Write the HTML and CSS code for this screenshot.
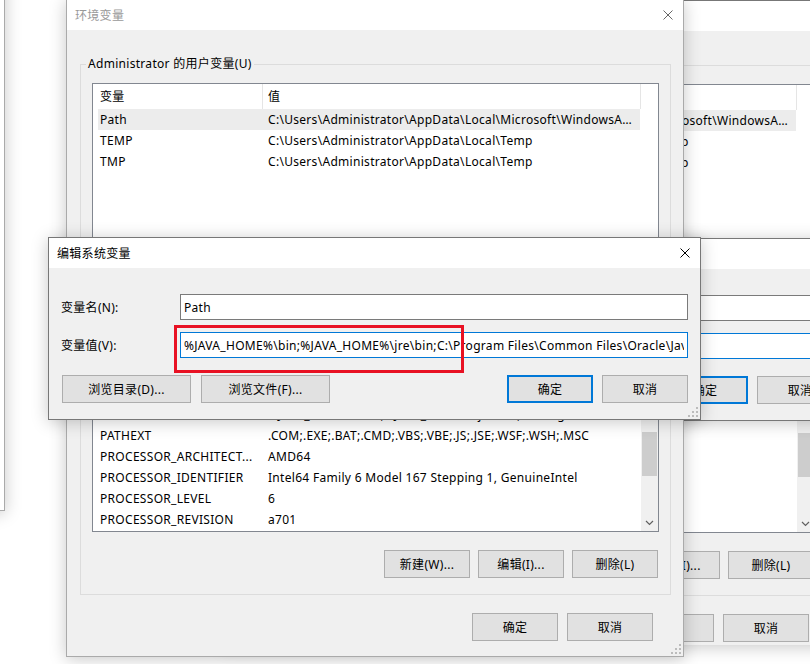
FILE: index.html
```html
<!DOCTYPE html>
<html lang="zh-CN">
<head>
  <meta charset="UTF-8">
  <title>环境变量</title>
  <link rel="stylesheet" href="styles.css">
</head>
<body>
  <div class="win side"></div>

  <div class="win env" id="envMain">
    <div class="titlebar">
      <span class="title">环境变量</span>
      <span class="close"><svg width="10" height="10" viewBox="0 0 10 10"><path d="M0.5 0.5L9.5 9.5M9.5 0.5L0.5 9.5" /></svg></span>
    </div>
    <div class="env-body">
      <fieldset class="group user">
        <legend>Administrator 的用户变量(U)</legend>
        <div class="listview">
          <div class="lv-main">
            <div class="lv-head"><div class="col name">变量</div><div class="col val">值</div></div>
            <div class="row sel"><div class="name">Path</div><div class="val">C:\Users\Administrator\AppData\Local\Microsoft\WindowsA...</div></div>
            <div class="row"><div class="name">TEMP</div><div class="val">C:\Users\Administrator\AppData\Local\Temp</div></div>
            <div class="row"><div class="name">TMP</div><div class="val">C:\Users\Administrator\AppData\Local\Temp</div></div>
          </div>
        </div>
        <div class="btn-row">
          <button class="btn">新建(N)...</button>
          <button class="btn">编辑(E)...</button>
          <button class="btn">删除(D)</button>
        </div>
      </fieldset>
      <fieldset class="group sys">
        <legend>系统变量(S)</legend>
        <div class="listview">
          <div class="lv-main">
            <div class="lv-head"><div class="col name">变量</div><div class="col val">值</div></div>
            <div class="row"><div class="name">NUMBER_OF_PROCESSORS</div><div class="val">16</div></div>
            <div class="row"><div class="name">OS</div><div class="val">Windows_NT</div></div>
            <div class="row"><div class="name">Path</div><div class="val">%JAVA_HOME%\bin;%JAVA_HOME%\jre\bin;C:\Program Files\Common Files\Oracle\Java\javapath;C:\Windows\system32</div></div>
            <div class="row"><div class="name">PATHEXT</div><div class="val">.COM;.EXE;.BAT;.CMD;.VBS;.VBE;.JS;.JSE;.WSF;.WSH;.MSC</div></div>
            <div class="row"><div class="name">PROCESSOR_ARCHITECT...</div><div class="val">AMD64</div></div>
            <div class="row"><div class="name">PROCESSOR_IDENTIFIER</div><div class="val">Intel64 Family 6 Model 167 Stepping 1, GenuineIntel</div></div>
            <div class="row"><div class="name">PROCESSOR_LEVEL</div><div class="val">6</div></div>
            <div class="row"><div class="name">PROCESSOR_REVISION</div><div class="val">a701</div></div>
          </div>
          <div class="scrollbar">
            <div class="thumb"></div>
            <svg class="arrow" width="17" height="17" viewBox="0 0 17 17"><polyline points="5,7 8.5,10.5 12,7" /></svg>
          </div>
        </div>
        <div class="btn-row">
          <button class="btn">新建(W)...</button>
          <button class="btn">编辑(I)...</button>
          <button class="btn">删除(L)</button>
        </div>
      </fieldset>
      <div class="btn-row foot">
        <button class="btn">确定</button>
        <button class="btn">取消</button>
      </div>
    </div>
    <svg class="grip" width="10" height="10" viewBox="0 0 10 10"><path d="M8 0h2v2h-2zM8 4h2v2h-2zM4 4h2v2h-2zM8 8h2v2h-2zM4 8h2v2h-2zM0 8h2v2h-2z" /></svg>
  </div>

  <div class="win edit" id="editMain">
    <div class="titlebar">
      <span class="title">编辑系统变量</span>
      <span class="close"><svg width="10" height="10" viewBox="0 0 10 10"><path d="M0.5 0.5L9.5 9.5M9.5 0.5L0.5 9.5" /></svg></span>
    </div>
    <div class="edit-body">
      <div class="fields">
        <label>变量名(N):</label>
        <input class="field" value="Path">
        <label>变量值(V):</label>
        <input class="field focus" value="%JAVA_HOME%\bin;%JAVA_HOME%\jre\bin;C:\Program Files\Common Files\Oracle\Java\javapath;C:\Windows\system32">
      </div>
      <div class="edit-btns">
        <button class="btn wide">浏览目录(D)...</button>
        <button class="btn wide">浏览文件(F)...</button>
        <button class="btn default">确定</button>
        <button class="btn">取消</button>
      </div>
    </div>
    <svg class="grip" width="10" height="10" viewBox="0 0 10 10"><path d="M8 0h2v2h-2zM8 4h2v2h-2zM4 4h2v2h-2zM8 8h2v2h-2zM4 8h2v2h-2zM0 8h2v2h-2z" /></svg>
  </div>

  <div class="mark"></div>

  <script>
    // second copy of both windows, sitting behind and to the right
    var env = document.getElementById('envMain');
    var envBack = env.cloneNode(true);
    envBack.id = 'envBack';
    envBack.classList.add('env-back');
    envBack.querySelectorAll('.sys .row .val').forEach(function (c) { c.textContent = ''; });
    document.body.insertBefore(envBack, env);

    var edit = document.getElementById('editMain');
    var editBack = edit.cloneNode(true);
    editBack.id = 'editBack';
    editBack.classList.add('edit-back');
    editBack.querySelectorAll('.field').forEach(function (f) { f.value = ''; });
    document.body.insertBefore(editBack, env);
  </script>
</body>
</html>
```

FILE: styles.css
```css
* {
  box-sizing: border-box;
}
html, body {
  margin: 0;
  width: 810px;
  height: 664px;
  overflow: hidden;
}
body {
  position: relative;
  background-color: #fff;
  color: #000;
  font: 12px "Noto Sans", "Noto Sans CJK SC", sans-serif;
  letter-spacing: 0.3px;
}
.win {
  position: absolute;
  background-color: #f0f0f0;
  border: 1px solid #aaa;
  box-shadow: 0 2px 16px rgba(0, 0, 0, 0.22);
}
.side {
  left: -300px;
  top: -20px;
  width: 305px;
  height: 531px;
  background-color: #fff;
  z-index: 1;
}
.titlebar {
  height: 30px;
  background-color: #fff;
  display: flex;
  align-items: center;
  justify-content: space-between;
  padding-left: 8px;
}
.title {
  color: #999;
}
.close {
  width: 30px;
  height: 30px;
  display: flex;
  align-items: center;
  justify-content: center;
}
.close svg path {
  stroke: #666;
  stroke-width: 1;
  fill: none;
}
.grip {
  position: absolute;
  right: 2px;
  bottom: 2px;
}
.grip path {
  fill: #bcbcbc;
}

/* 环境变量 */
.env {
  left: 66px;
  top: -1px;
  width: 618px;
  z-index: 4;
}
.env-back {
  left: 222px;
  top: 0;
  height: 645px;
  overflow: hidden;
  border-bottom: 0;
  border-top-color: #777;
  z-index: 2;
}
.env-body {
  padding: 26px 12px 15px 13px;
}
.group {
  margin: 0;
  min-width: 0;
  border: 1px solid #dcdcdc;
  padding: 11px 11px 16px;
}
.group legend {
  margin-left: -6px;
  padding: 0 2px;
  line-height: 16px;
}
.user {
  padding-bottom: 12px;
}
.sys {
  margin-top: 12px;
}
.listview {
  display: flex;
  border: 1px solid #828790;
  background-color: #fff;
  overflow: hidden;
}
.user .listview {
  height: 163px;
}
.sys .listview {
  height: 196px;
}
.lv-main {
  width: 548px;
  flex: none;
  overflow: hidden;
}
.lv-head {
  display: flex;
  height: 25px;
  line-height: 25px;
}
.lv-head .col {
  border-right: 1px solid #e5e5e5;
}
.lv-head .name {
  width: 170px;
  padding-left: 7px;
}
.lv-head .val {
  width: 378px;
  padding-left: 5px;
}
.row {
  display: flex;
  width: 542px;
  height: 21px;
  line-height: 21px;
  margin-left: 5px;
  white-space: nowrap;
}
.row.sel {
  background-color: #ececec;
}
.row .name {
  width: 164px;
  padding-left: 2px;
  overflow: hidden;
}
.row .val {
  width: 378px;
  padding: 0 8px 0 6px;
  overflow: hidden;
  text-overflow: ellipsis;
}
.scrollbar {
  width: 17px;
  flex: none;
  background-color: #f0f0f0;
  display: flex;
  flex-direction: column;
  align-items: center;
}
.thumb {
  width: 15px;
  height: 44px;
  margin-top: 95px;
  background-color: #cdcdcd;
}
.arrow {
  margin-top: auto;
}
.arrow polyline {
  fill: none;
  stroke: #606060;
  stroke-width: 1.2;
}
.btn-row {
  display: flex;
  justify-content: flex-end;
  gap: 8px;
  margin-top: 18px;
  padding-right: 1px;
}
.user .btn-row {
  margin-top: 10px;
}
.foot {
  gap: 9px;
  padding-right: 18px;
}
.btn {
  width: 86px;
  height: 28px;
  padding: 0;
  border: 1px solid #adadad;
  background-color: #e1e1e1;
  color: #000;
  font: inherit;
  letter-spacing: inherit;
}
.btn.wide {
  width: 129px;
}
.btn.default {
  border: 2px solid #0078d7;
}

/* 编辑系统变量 */
.edit {
  left: 48px;
  top: 237px;
  width: 653px;
  border-color: #777;
  z-index: 5;
}
.edit .title {
  color: #000;
}
.edit .close svg path {
  stroke: #000;
}
.edit-back {
  left: 203px;
  top: 238px;
  z-index: 3;
}
.edit-body {
  padding: 26px 12px 16px 12px;
}
.fields {
  display: grid;
  grid-template-columns: 119px 1fr;
  row-gap: 12px;
  align-items: center;
}
.field {
  width: 100%;
  height: 26px;
  border: 1px solid #7a7a7a;
  padding: 0 3px;
  background-color: #fff;
  color: #000;
  font: inherit;
  letter-spacing: inherit;
  outline: none;
}
.field.focus {
  border-color: #0078d7;
}
.edit-btns {
  display: flex;
  gap: 9px;
  margin-top: 17px;
  padding-left: 1px;
}
.edit-btns .wide + .wide {
  margin-left: 1px;
}
.edit-btns .default {
  margin-left: auto;
}
.mark {
  position: absolute;
  left: 174px;
  top: 325px;
  width: 290px;
  height: 48px;
  border: 3px solid #e81123;
  z-index: 6;
}
```
